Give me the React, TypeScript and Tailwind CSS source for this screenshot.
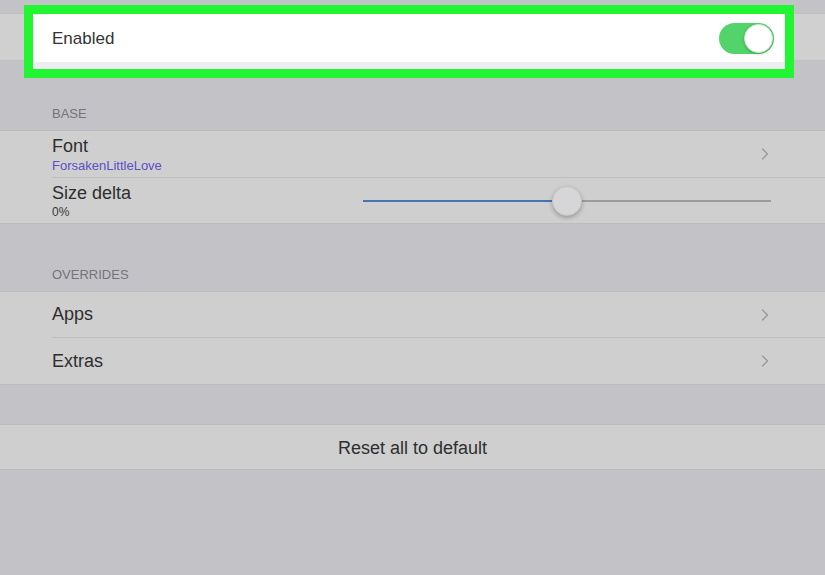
import { ChevronRight } from "lucide-react";

const font = { fontFamily: '"Liberation Sans", Arial, sans-serif' };

function Chevron() {
  return <ChevronRight className="h-[20px] w-[20px] text-[#9a9a9c]" strokeWidth={1.6} />;
}

function SectionLabel({ children, h }: { children: string; h: string }) {
  return (
    <div className={`flex items-end pb-[7px] pl-[52px] text-[13px] uppercase text-[#75747a] ${h}`}>
      {children}
    </div>
  );
}

function NavRow({ label, last }: { label: string; last?: boolean }) {
  return (
    <div className="pl-[52px]">
      <div
        className={`flex h-[46px] items-center justify-between pr-[50px] ${
          last ? "" : "border-b border-[#bebebe]"
        }`}
      >
        <span className="text-[18px] text-[#2e2e30]">{label}</span>
        <Chevron />
      </div>
    </div>
  );
}

export default function App() {
  return (
    <div className="flex h-[575px] w-[825px] flex-col overflow-hidden bg-[#c3c2c7]" style={font}>
      <div className="h-[13px]" />

      {/* Enabled row with highlight box */}
      <div className="relative h-[48px] border-y border-[#c0c0c0] bg-[#d0d0d0]">
        <div className="absolute left-[24px] right-[31px] top-[-9px] flex h-[73px] flex-col border-[9px] border-[#22f532] bg-[#eeeef2]">
          <div className="flex h-[48px] items-center justify-between bg-white pl-[19px] pr-[11px]">
            <span className="mt-[2px] text-[17px] text-[#333335]">Enabled</span>
            <div className="flex h-[31px] w-[55px] items-center justify-end rounded-full bg-[#52d46a] p-[1px]">
              <div className="h-[29px] w-[29px] rounded-full border border-[#c9e8cd] bg-white shadow-[0_1px_3px_rgba(0,0,0,0.25)]" />
            </div>
          </div>
        </div>
      </div>

      <SectionLabel h="h-[69px]">Base</SectionLabel>
      <div className="border-y border-[#bcbcbc] bg-[#cfcfcf]">
        <div className="pl-[52px]">
          <div className="flex h-[47px] items-center justify-between border-b border-[#bebebe] pr-[50px]">
            <div className="flex flex-col leading-none">
              <span className="text-[18px] text-[#2e2e30]">Font</span>
              <span className="mt-[4px] text-[13px] text-[#5b4fc4]">ForsakenLittleLove</span>
            </div>
            <Chevron />
          </div>
        </div>
        <div className="flex h-[45px] items-center pl-[52px] pr-[54px]">
          <div className="flex w-[311px] flex-col leading-none">
            <span className="text-[18px] text-[#2e2e30]">Size delta</span>
            <span className="mt-[4px] text-[12px] text-[#3a3a3c]">0%</span>
          </div>
          <div className="relative flex flex-1 items-center">
            <div className="h-[2px] w-[205px] bg-[#4674b0]" />
            <div className="h-[2px] flex-1 bg-[#9c9c9c]" />
            <div className="absolute left-[189px] top-1/2 h-[30px] w-[30px] -translate-y-1/2 rounded-full border border-[#c4c4c4] bg-[#d6d6d8] shadow-[0_2px_4px_rgba(0,0,0,0.25)]" />
          </div>
        </div>
      </div>

      <SectionLabel h="h-[67px]">Overrides</SectionLabel>
      <div className="border-y border-[#bcbcbc] bg-[#cfcfcf]">
        <NavRow label="Apps" />
        <NavRow label="Extras" last />
      </div>

      <div className="h-[39px]" />
      <div className="flex h-[46px] items-center justify-center border-y border-[#bcbcbc] bg-[#cfcfcf]">
        <span className="mt-[2px] text-[18px] text-[#2e2e30]">Reset all to default</span>
      </div>
    </div>
  );
}
